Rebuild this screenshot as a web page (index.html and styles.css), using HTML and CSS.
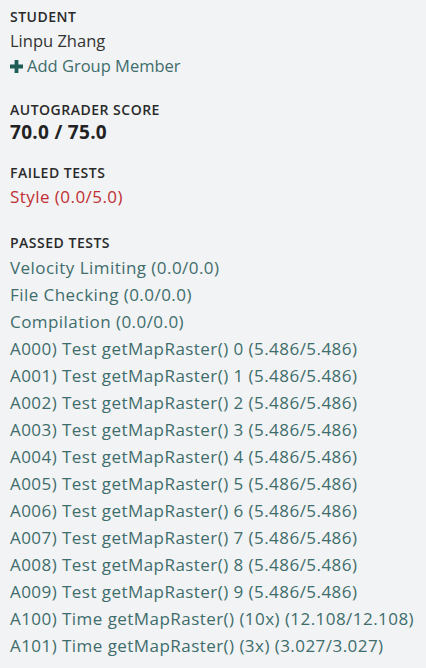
FILE: index.html
```html
<!DOCTYPE html>
<html>
<head>
<meta charset="utf-8">
<link rel="stylesheet" href="styles.css">
</head>
<body>
<div class="panel">
  <section class="sec sec-student">
    <div class="label">STUDENT</div>
    <div class="name">Linpu Zhang</div>
    <div class="add"><svg class="plus" width="13" height="13" viewBox="0 0 13 13"><path d="M4.6 0h3.8v4.6H13v3.8H8.4V13H4.6V8.4H0V4.6h4.6z" fill="#1d5c57"/></svg>Add Group Member</div>
  </section>
  <section class="sec sec-score">
    <div class="label">AUTOGRADER SCORE</div>
    <div class="score">70.0 / 75.0</div>
  </section>
  <section class="sec sec-failed">
    <div class="label">FAILED TESTS</div>
    <div class="item fail">Style (0.0/5.0)</div>
  </section>
  <section class="sec sec-passed">
    <div class="label">PASSED TESTS</div>
    <div class="list">
      <div class="item pass">Velocity Limiting (0.0/0.0)</div>
      <div class="item pass">File Checking (0.0/0.0)</div>
      <div class="item pass">Compilation (0.0/0.0)</div>
      <div class="item pass">A000) Test getMapRaster() 0 (5.486/5.486)</div>
      <div class="item pass">A001) Test getMapRaster() 1 (5.486/5.486)</div>
      <div class="item pass">A002) Test getMapRaster() 2 (5.486/5.486)</div>
      <div class="item pass">A003) Test getMapRaster() 3 (5.486/5.486)</div>
      <div class="item pass">A004) Test getMapRaster() 4 (5.486/5.486)</div>
      <div class="item pass">A005) Test getMapRaster() 5 (5.486/5.486)</div>
      <div class="item pass">A006) Test getMapRaster() 6 (5.486/5.486)</div>
      <div class="item pass">A007) Test getMapRaster() 7 (5.486/5.486)</div>
      <div class="item pass">A008) Test getMapRaster() 8 (5.486/5.486)</div>
      <div class="item pass">A009) Test getMapRaster() 9 (5.486/5.486)</div>
      <div class="item pass">A100) Time getMapRaster() (10x) (12.108/12.108)</div>
      <div class="item pass">A101) Time getMapRaster() (3x) (3.027/3.027)</div>
    </div>
  </section>
</div>
</body>
</html>
```

FILE: styles.css
```css
html, body {
  margin: 0;
  padding: 0;
  background: #f2f3f5;
}
body {
  font-family: "Open Sans", "Noto Sans", sans-serif;
  color: #333;
}
.panel {
  padding: 8px 10px 0 10px;
  display: flex;
  flex-direction: column;
}
.sec {
  display: flex;
  flex-direction: column;
}
.label {
  font-size: 14px;
  font-weight: 600;
  letter-spacing: 0.5px;
  color: #2a2a2a;
  line-height: 18px;
}
.name {
  margin-top: 3px;
  font-size: 16.5px;
  line-height: 24px;
  color: #333;
}
.add {
  font-size: 16.5px;
  line-height: 26px;
  color: #3e6d6b;
  display: flex;
  align-items: center;
  gap: 4px;
}
.sec-score { margin-top: 22px; }
.score {
  margin-top: 1px;
  font-size: 19px;
  font-weight: 700;
  letter-spacing: 0.3px;
  line-height: 24px;
  color: #222;
}
.sec-failed { margin-top: 20px; }
.sec-passed { margin-top: 25px; }
.item {
  font-size: 17px;
  letter-spacing: 0.45px;
  line-height: 27px;
}
.sec-failed .item { margin-top: 2px; line-height: 25px; }
.list { margin-top: 2px; display: flex; flex-direction: column; }
.fail { color: #bf2f33; }
.pass { color: #3e6d6b; }
```
